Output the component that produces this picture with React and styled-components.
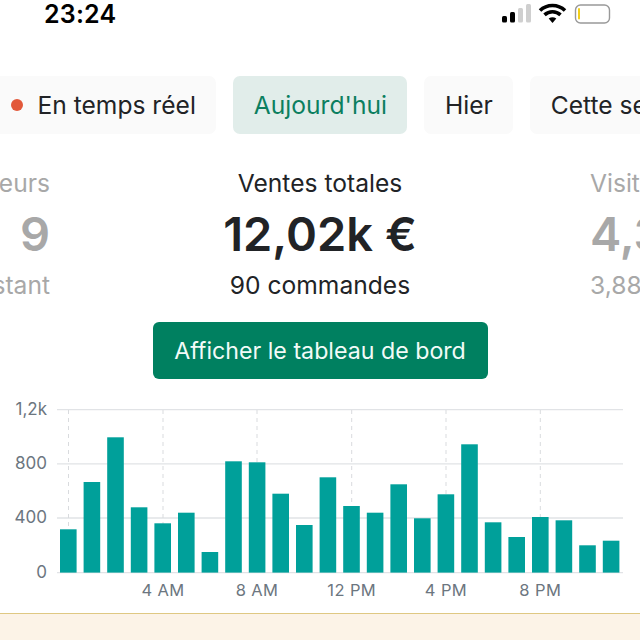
import React from "react";
import styled, { createGlobalStyle } from "styled-components";

const Global = createGlobalStyle`
  html, body { margin: 0; padding: 0; background: #fff; }
  * { box-sizing: border-box; }
`;
const Page = styled.div`
  width: 640px; height: 640px; overflow: hidden; display: flex; flex-direction: column;
  font-family: Inter, "Liberation Sans", sans-serif; color: #212326; background: #fff;
`;
const StatusBar = styled.div`
  height: 28px; flex: none; display: flex; align-items: center; justify-content: space-between;
  padding: 0 27px 0 44px;
`;
const Time = styled.div`
  font-size: 25px; font-weight: 600; color: #000; line-height: 28px; letter-spacing: 0.2px;
`;
const Tabs = styled.div`
  flex: none; display: flex; gap: 17px; margin: 48px 0 0 -10px; height: 59px; width: 700px;
`;
const Tab = styled.div`
  flex: none; height: 58px; padding: 0 20.5px; border-radius: 7px; display: flex; align-items: center; gap: 15px;
  font-size: 24.6px; white-space: nowrap;
  background: ${(p) => (p.$active ? "#e1edea" : "#fafafa")};
  color: ${(p) => (p.$active ? "#0b7f5f" : "#212326")};
`;
const Dot = styled.span`
  width: 12px; height: 12px; border-radius: 50%; background: #e2583a; flex: none;
`;
const Stats = styled.div`
  flex: none; display: flex; margin-top: 31px; height: 131px;
`;
const Stat = styled.div`
  display: flex; flex-direction: column; white-space: nowrap;
  flex: ${(p) => (p.$main ? "1" : "none")};
  width: ${(p) => (p.$main ? "auto" : "50px")};
  align-items: ${(p) => (p.$align || "center")};
  color: ${(p) => (p.$main ? "#212326" : "#a8a8a8")};
`;
const StatLabel = styled.div`
  font-size: 24.6px; line-height: 34px; height: 34px;
`;
const StatValue = styled.div`
  font-size: 47px; font-weight: 600; line-height: 68px; height: 68px;
`;
const ActionRow = styled.div`
  flex: none; display: flex; justify-content: center; margin-top: 25px;
`;
const Action = styled.button`
  width: 335px; height: 57px; border: 0; border-radius: 6px; background: #008060; color: #f2fbf8;
  font: 400 23.2px Inter, "Liberation Sans", sans-serif; padding: 0;
`;
const Chart = styled.svg`
  flex: none; display: block; margin-top: 17px;
`;
const Banner = styled.div`
  flex: 1; background: #fcf3e7; border-top: 1px solid #dfc883;
`;

const tops = [529.3, 482, 437.3, 507.3, 523.3, 512.7, 552, 461.3, 462.3, 493.7, 525, 477.3, 506, 512.7, 484.3, 518.3, 494.3, 444.3, 522.3, 537, 517, 520.3, 545.3, 540.7];
const yTicks = [["1,2k", 409.7], ["800", 463.8], ["400", 518], ["0", 572.6]];
const xTicks = [["", 68.5], ["4 AM", 163], ["8 AM", 257], ["12 PM", 351.7], ["4 PM", 446], ["8 PM", 540.3]];
const TOP = 379 + 17;

function SalesChart() {
  return (
    <Chart width="640" height="217" viewBox={`0 ${TOP} 640 217`} fontFamily="Inter, 'Liberation Sans', sans-serif" fontSize="17" fill="#6c7680">
      {yTicks.map(([label, y]) => (
        <g key={label}>
          <line x1="57" x2="623" y1={y} y2={y} stroke="#e1e3e6" strokeWidth="1.3" />
          <text x="47" y={y + 5} textAnchor="end">{label}</text>
        </g>
      ))}
      {xTicks.map(([label, x]) => (
        <g key={x}>
          <line x1={x} x2={x} y1="410" y2="572" stroke="#d9dbde" strokeWidth="1" strokeDasharray="4 4" />
          {label && <text x={x} y="596" textAnchor="middle" fontSize="16.5" letterSpacing="0.4">{label}</text>}
        </g>
      ))}
      {tops.map((t, i) => (
        <rect key={i} x={60 + i * 23.6} y={t} width="16.6" height={572.6 - t} fill="#00a09a" />
      ))}
    </Chart>
  );
}

function StatusIcons() {
  return (
    <svg width="111" height="28" viewBox="502 0 111 28">
      <rect x="502" y="16" width="5" height="6.5" rx="1.5" fill="#000" />
      <rect x="510" y="12" width="5" height="10.5" rx="1.5" fill="#000" />
      <rect x="518" y="8" width="5" height="14.5" rx="1.5" fill="#cfcfcf" />
      <rect x="526" y="4" width="5" height="18.5" rx="1.5" fill="#cfcfcf" />
      <path d="M540 10.5 A18 18 0 0 1 565 10.5" fill="none" stroke="#000" strokeWidth="3.6" />
      <path d="M544.5 14.8 A12 12 0 0 1 560.5 14.8" fill="none" stroke="#000" strokeWidth="3.6" />
      <path d="M548.7 18.6 A6.2 6.2 0 0 1 556.3 18.6 L552.5 23 Z" fill="#000" />
      <rect x="575.5" y="5" width="34" height="18" rx="5" fill="#fff" stroke="#999" strokeWidth="1.4" />
      <rect x="578" y="8" width="2" height="11.5" rx="1" fill="#f2cf1a" />
      <path d="M613 11 A3.5 3.5 0 0 1 613 17 Z" fill="#999" />
    </svg>
  );
}

export default function App() {
  return (
    <Page>
      <Global />
      <StatusBar>
        <Time>23:24</Time>
        <StatusIcons />
      </StatusBar>
      <Tabs>
        <Tab><Dot />En temps réel</Tab>
        <Tab $active>Aujourd'hui</Tab>
        <Tab>Hier</Tab>
        <Tab>Cette semaine</Tab>
      </Tabs>
      <Stats>
        <Stat $align="flex-end">
          <StatLabel>Visiteurs</StatLabel>
          <StatValue>9</StatValue>
          <StatLabel>à cet instant</StatLabel>
        </Stat>
        <Stat $main>
          <StatLabel>Ventes totales</StatLabel>
          <StatValue>12,02k €</StatValue>
          <StatLabel>90 commandes</StatLabel>
        </Stat>
        <Stat $align="flex-start">
          <StatLabel>Visites</StatLabel>
          <StatValue>4,3k</StatValue>
          <StatLabel>3,88k visiteurs</StatLabel>
        </Stat>
      </Stats>
      <ActionRow>
        <Action>Afficher le tableau de bord</Action>
      </ActionRow>
      <SalesChart />
      <Banner />
    </Page>
  );
}
